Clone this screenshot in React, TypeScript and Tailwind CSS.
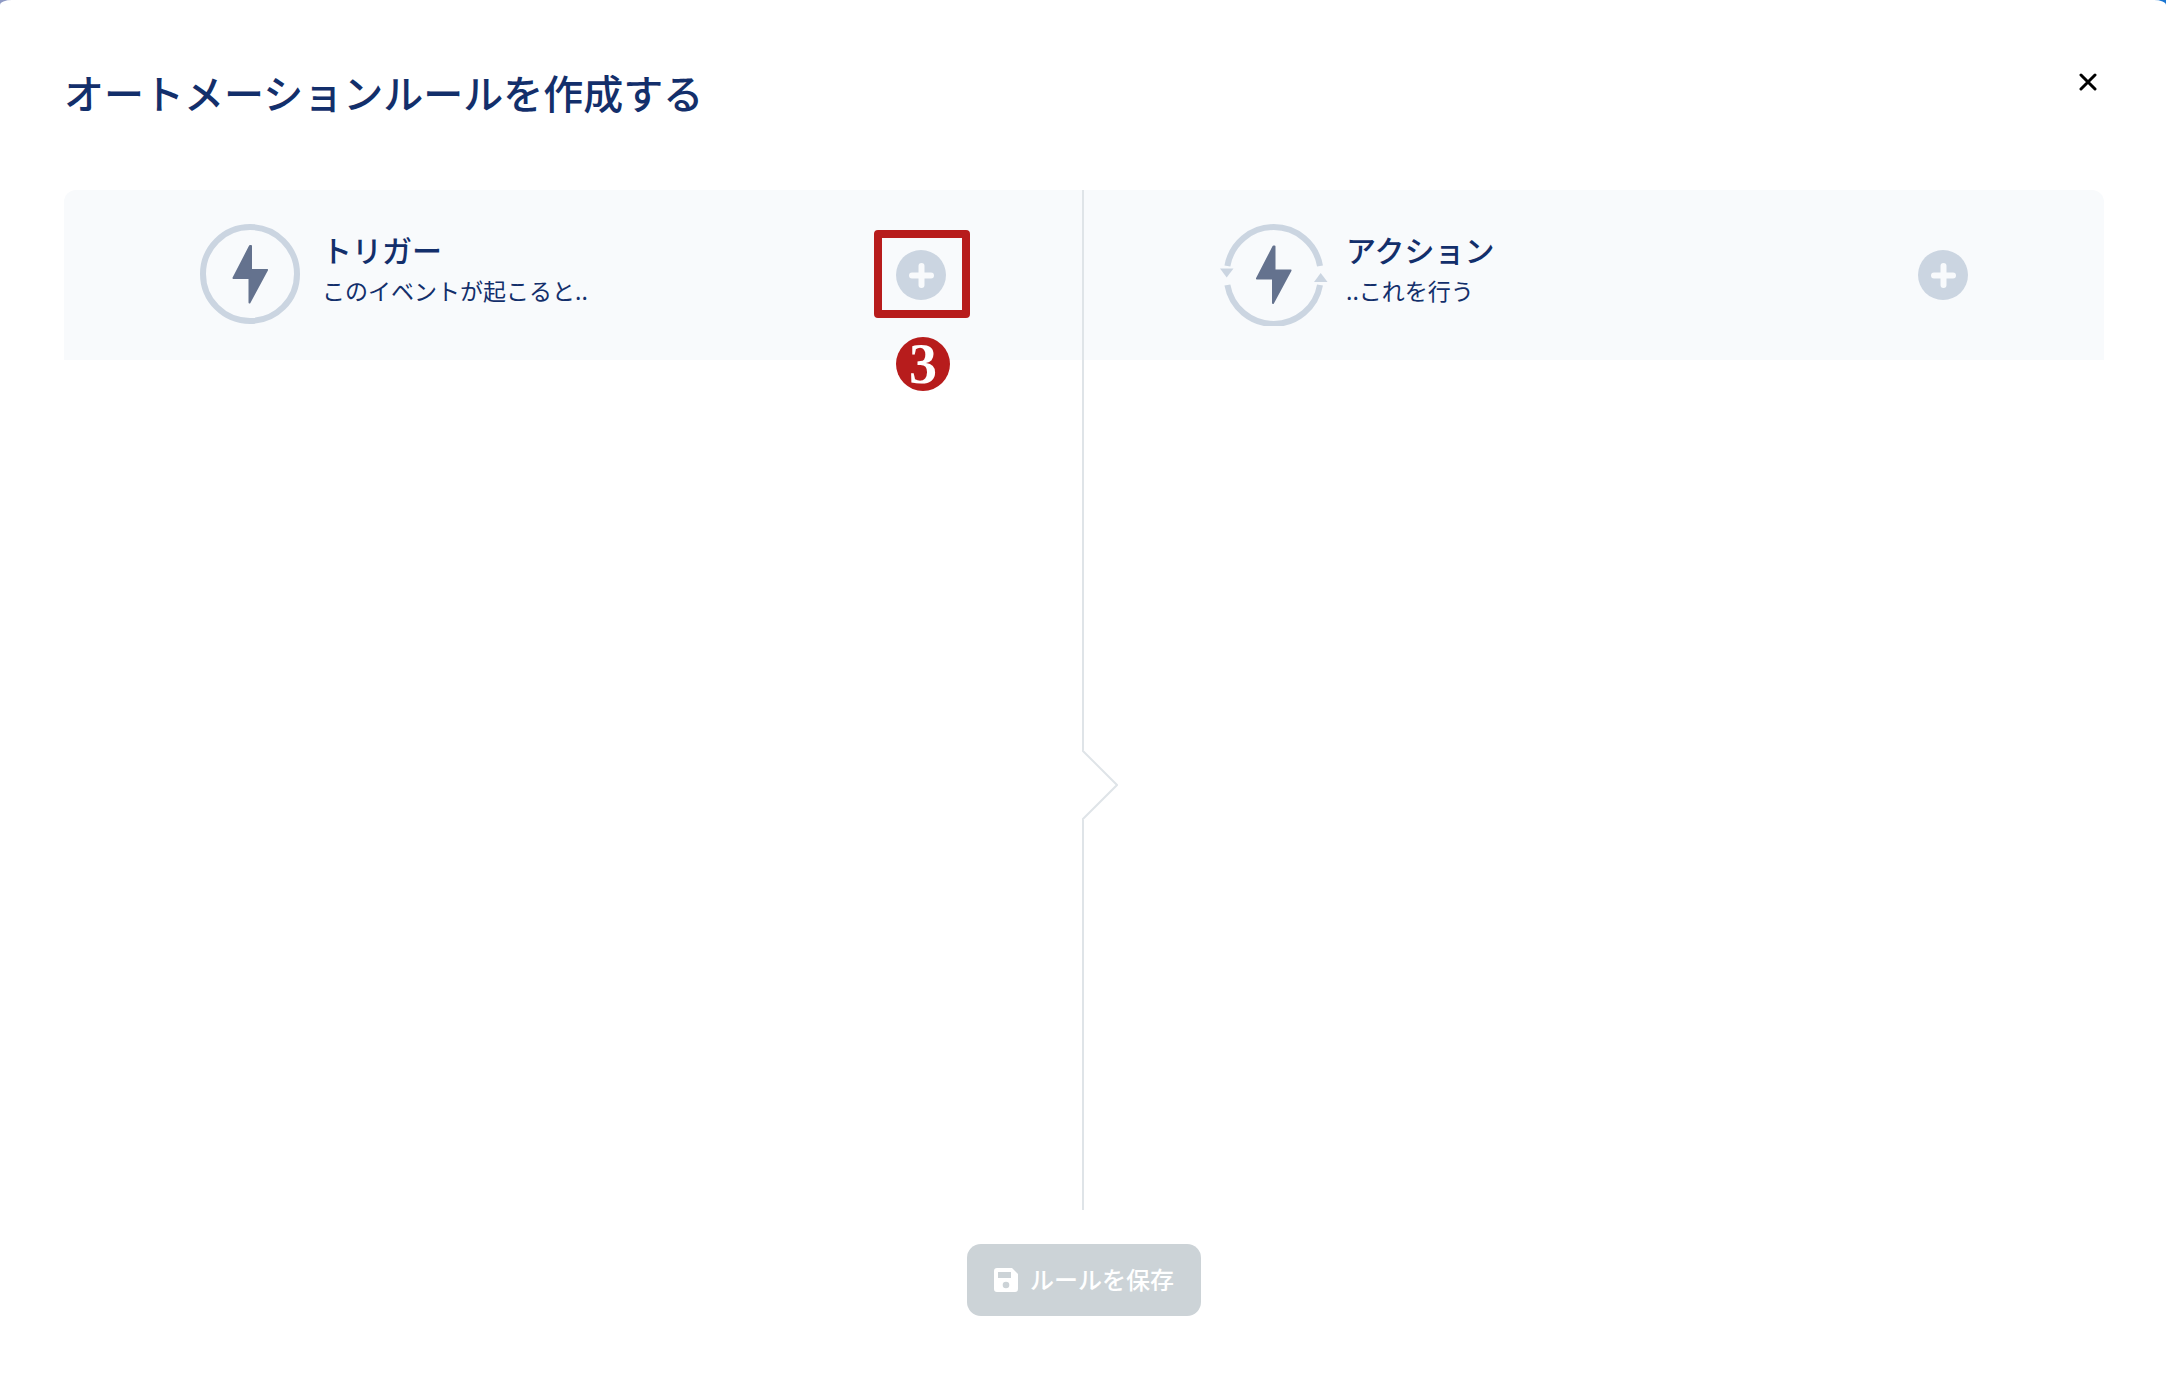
import React, { useState } from 'react';

interface PanelHeaderProps {
  title: string;
  subtitle: string;
  icon: React.ReactNode;
  addLabel: string;
  children?: React.ReactNode;
}

const BOLT = 'M50 22 L33.5 54 H49.5 V78.5 L67 46 H51 V22 Z';

const TriggerIcon = () => (
  <svg className="h-[102px] w-[104px] shrink-0" viewBox="0 0 104 102" fill="none" aria-hidden="true">
    <circle cx="50" cy="50" r="47" stroke="#cbd5e1" strokeWidth="6" />
    <path d={BOLT} fill="#64728e" stroke="#64728e" strokeWidth="2" strokeLinejoin="round" />
  </svg>
);

const ActionIcon = () => (
  <svg className="h-[102px] w-[108px] shrink-0" viewBox="0 0 108 102" fill="none" aria-hidden="true">
    <path d="M7.4 42 A47 47 0 0 1 100 42" stroke="#cbd5e1" strokeWidth="6" />
    <path d="M7.4 61 A47 47 0 0 0 100 61" stroke="#cbd5e1" strokeWidth="6" />
    <path d="M0 44.5 H13.5 L6.7 53.5 Z" fill="#cbd5e1" />
    <path d="M94 58 H107.5 L100.7 49 Z" fill="#cbd5e1" />
    <path transform="translate(3.5 0.5)" d={BOLT} fill="#64728e" stroke="#64728e" strokeWidth="2" strokeLinejoin="round" />
  </svg>
);

const PanelHeader: React.FC<PanelHeaderProps> = ({ title, subtitle, icon, addLabel, children }) => (
  <div className="flex h-[170px] items-center bg-[#f8fafc] px-[136px]">
    {icon}
    <div className="ml-[18px] flex-1 pb-[10px]">
      <h2 className="text-[30px] leading-[40px] font-medium">{title}</h2>
      <p className="text-[23px] leading-[42px]">{subtitle}</p>
    </div>
    <div className="relative">
      <button type="button" aria-label={addLabel} className="block size-[50px] rounded-full bg-[#cbd5e1]">
        <svg viewBox="0 0 50 50" fill="none" aria-hidden="true">
          <path d="M25.5 16 V35 M16 25.5 H35" stroke="#f8fafc" strokeWidth="6" strokeLinecap="round" />
        </svg>
      </button>
      {children}
    </div>
  </div>
);

const StepMarker = ({ step }: { step: number }) => (
  <>
    <div className="pointer-events-none absolute -top-5 -left-[22px] h-[88px] w-24 rounded-[4px] border-8 border-[#b71c1c]" />
    <span className="absolute top-[87px] left-0 flex size-[54px] items-center justify-center rounded-full bg-[#b71c1c] font-['Liberation_Serif',serif] text-[56px] leading-[54px] font-bold text-white">
      {step}
    </span>
  </>
);

const Divider = () => (
  <div className="z-10 flex w-[2px] shrink-0 flex-col">
    <div className="h-[170px] bg-[#dfe4e8]" />
    <div className="flex-1 bg-[#dfe4e8]" />
    <svg className="h-[70px] w-[36px]" viewBox="0 0 36 70" fill="none" aria-hidden="true">
      <path d="M0 0 L35 35 L0 70" stroke="#dfe4e8" strokeWidth="2" />
    </svg>
    <div className="flex-1 bg-[#dfe4e8]" />
  </div>
);

export default function App() {
  const [open, setOpen] = useState(true);

  return (
    <div className="min-h-screen bg-linear-to-r from-[#8f9ac4] to-[#1976d2] font-['Noto_Sans_CJK_JP',sans-serif] text-[#132f6b]">
      {open && (
        <div
          role="dialog"
          aria-labelledby="rule-title"
          className="flex min-h-screen flex-col rounded-tl-[12px_5px] rounded-tr-[12px_5px] bg-white pr-[62px] pb-[60px] pl-16"
        >
          <header className="flex items-start justify-between pt-[62px] pb-[68px]">
            <h1 id="rule-title" className="text-[40px] leading-[60px] font-medium">
              オートメーションルールを作成する
            </h1>
            <button type="button" aria-label="閉じる" className="mt-1 p-[7px]" onClick={() => setOpen(false)}>
              <svg className="size-[18px]" viewBox="0 0 18 18" fill="none" aria-hidden="true">
                <path d="M2 2 L16 16 M16 2 L2 16" stroke="#000" strokeWidth="3" strokeLinecap="round" />
              </svg>
            </button>
          </header>

          <main className="flex flex-1">
            <section className="flex flex-1">
              <div className="min-w-0 flex-1 *:rounded-tl-xl">
                <PanelHeader title="トリガー" subtitle="このイベントが起こると.." icon={<TriggerIcon />} addLabel="トリガーを追加">
                  <StepMarker step={3} />
                </PanelHeader>
              </div>
              <Divider />
            </section>
            <section className="min-w-0 flex-1 *:rounded-tr-xl">
              <PanelHeader title="アクション" subtitle="..これを行う" icon={<ActionIcon />} addLabel="アクションを追加" />
            </section>
          </main>

          <footer className="flex justify-center pt-[34px]">
            <button
              type="button"
              disabled
              className="flex h-[72px] items-center gap-3 rounded-[14px] bg-[#ccd3d7] px-[27px] text-[24px] font-medium text-white"
            >
              <svg className="size-6" viewBox="0 0 24 24" aria-hidden="true">
                <path
                  fill="currentColor"
                  fillRule="evenodd"
                  d="M3 0 H18 L24 6 V21 A3 3 0 0 1 21 24 H3 A3 3 0 0 1 0 21 V3 A3 3 0 0 1 3 0 Z M4 4 V10 H17 V4 Z M12 13.7 A3.3 3.3 0 1 0 12 20.3 A3.3 3.3 0 1 0 12 13.7 Z"
                />
              </svg>
              <span className="pb-0.5">ルールを保存</span>
            </button>
          </footer>
        </div>
      )}
    </div>
  );
}
